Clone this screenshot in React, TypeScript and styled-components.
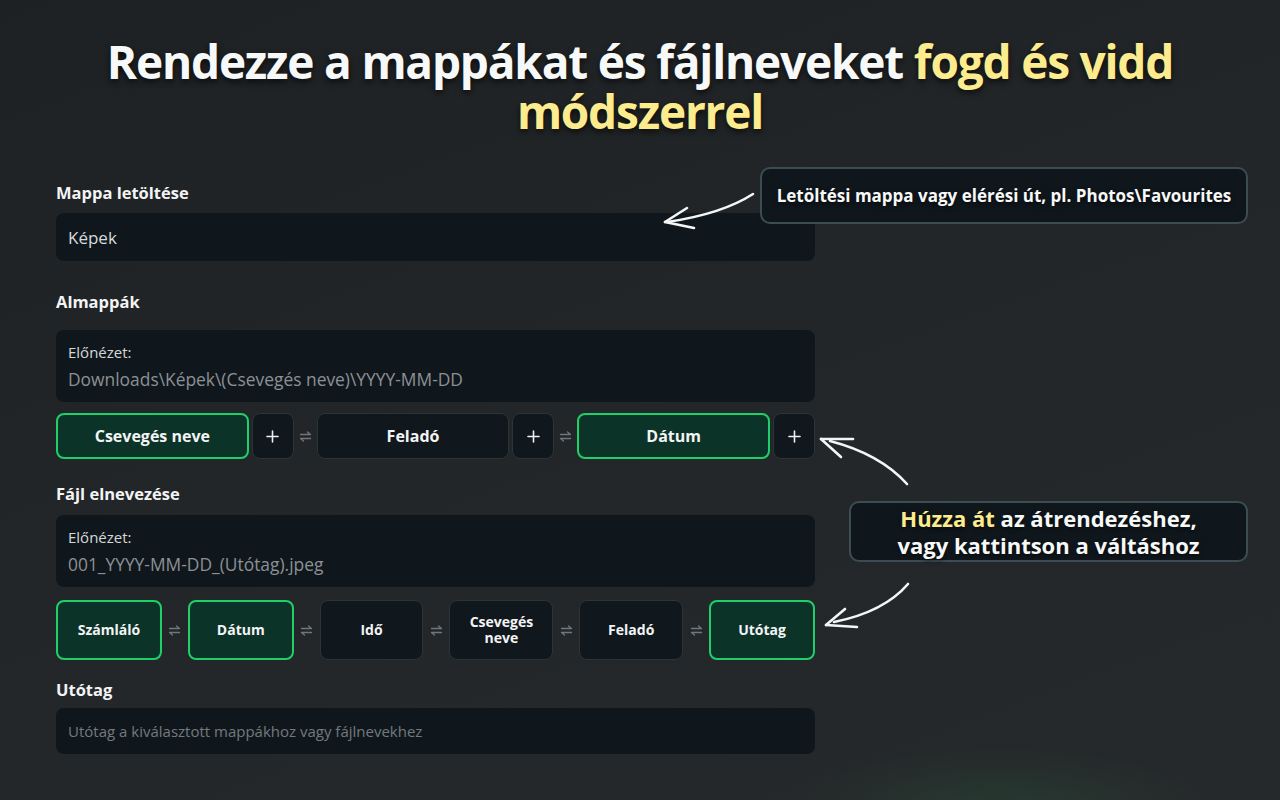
import styled, { createGlobalStyle } from "styled-components";
import { FC, Fragment } from "react";
import { Plus } from "lucide-react";

const Global = createGlobalStyle`
  * { box-sizing: border-box; }
  html, body { margin: 0; padding: 0; }
  body {
    font-family: "Open Sans", "Noto Sans", sans-serif;
    background: #232628;
  }
`;

const SwapIcon: FC = () => (
  <svg width="13" height="13" viewBox="0 0 13 13" fill="none">
    <path d="M1.5 4.5h10l-3-2.5" stroke="#6f777c" strokeWidth="1.3" strokeLinecap="round" strokeLinejoin="round" />
    <path d="M11.5 8.5h-10l3 2.5" stroke="#6f777c" strokeWidth="1.3" strokeLinecap="round" strokeLinejoin="round" />
  </svg>
);

const Arrows: FC = () => (
  <ArrowLayer width="1280" height="800" viewBox="0 0 1280 800" fill="none">
    <g stroke="#f4f5f6" strokeWidth="2.6" strokeLinecap="round" strokeLinejoin="round">
      <path d="M753 194 Q722 214 667 222" />
      <path d="M665 222 L687 208" />
      <path d="M665 222 L694 228" />

      <path d="M907 484 Q880 454 830 441" />
      <path d="M821 439 L853 439" />
      <path d="M821 439 L841 457" />

      <path d="M908 584 Q884 612 834 622" />
      <path d="M826 625 L857 627" />
      <path d="M826 625 L845 609" />
    </g>
  </ArrowLayer>
);

const folderChips = ["Csevegés neve", "Feladó", "Dátum"];
const folderActive = [true, false, true];

const fileChips = ["Számláló", "Dátum", "Idő", "Csevegés\nneve", "Feladó", "Utótag"];
const fileActive = [true, true, false, false, false, true];

export default function App() {
  return (
    <>
      <Global />
      <Page>
        <Title>
          Rendezze a mappákat és fájlneveket <Hl>fogd és vidd</Hl>
          <br />
          <Hl>módszerrel</Hl>
        </Title>

        <Form>
          <Label $gap={9}>Mappa letöltése</Label>
          <Input>Képek</Input>

          <Label $top={30} $gap={17}>Almappák</Label>
          <Preview>
            <PreviewTitle>Előnézet:</PreviewTitle>
            <PreviewValue>Downloads\Képek\(Csevegés neve)\YYYY-MM-DD</PreviewValue>
          </Preview>
          <FolderRow>
            {folderChips.map((c, i) => (
              <Fragment key={c}>
                {i > 0 && (
                  <Swap $w={23}>
                    <SwapIcon />
                  </Swap>
                )}
                <FolderGroup>
                  <Chip $active={folderActive[i]} $size={16}>
                    {c}
                  </Chip>
                  <PlusBtn>
                    <Plus size={19} strokeWidth={2} />
                  </PlusBtn>
                </FolderGroup>
              </Fragment>
            ))}
          </FolderRow>

          <Label $top={24} $gap={10}>Fájl elnevezése</Label>
          <Preview>
            <PreviewTitle>Előnézet:</PreviewTitle>
            <PreviewValue>001_YYYY-MM-DD_(Utótag).jpeg</PreviewValue>
          </Preview>
          <FileRow>
            {fileChips.map((c, i) => (
              <Fragment key={c}>
                {i > 0 && (
                  <Swap $w={26}>
                    <SwapIcon />
                  </Swap>
                )}
                <Chip $active={fileActive[i]} $size={14}>
                  {c}
                </Chip>
              </Fragment>
            ))}
          </FileRow>

          <Label $top={19} $gap={7}>Utótag</Label>
          <Input $small>Utótag a kiválasztott mappákhoz vagy fájlnevekhez</Input>
        </Form>

        <Callout $top={167} $left={760} $width={488} $height={57}>
          <CalloutText $size={17} $lh={22}>
            Letöltési mappa vagy elérési út, pl. Photos\Favourites
          </CalloutText>
        </Callout>

        <Callout $top={501} $left={849} $width={399} $height={61}>
          <CalloutText $size={22} $lh={27}>
            <Hl>Húzza át</Hl> az átrendezéshez,
            <br />
            vagy kattintson a váltáshoz
          </CalloutText>
        </Callout>

        <Arrows />
      </Page>
    </>
  );
}

const Page = styled.div`
  position: relative;
  width: 1280px;
  height: 800px;
  overflow: hidden;
  background:
    radial-gradient(ellipse 300px 90px at 1000px 810px, rgba(40, 90, 60, 0.35), transparent 70%),
    linear-gradient(160deg, #1e2123 0%, #232628 45%, #26292b 100%);
  color: #fff;
`;

const Title = styled.h1`
  margin: 0;
  padding-top: 36px;
  text-align: center;
  font-family: "Open Sans", "Noto Sans", sans-serif;
  font-weight: 700;
  font-size: 46px;
  line-height: 50px;
  letter-spacing: -1.2px;
  color: #f7f8f8;
  text-shadow: 0 3px 6px rgba(0, 0, 0, 0.7);
`;

const Hl = styled.span`
  color: #fdec8e;
`;

const Form = styled.div`
  width: 759px;
  margin: 46px 0 0 56px;
  display: flex;
  flex-direction: column;
`;

const Label = styled.div<{ $top?: number; $gap: number }>`
  margin-top: ${(p) => p.$top ?? 0}px;
  margin-bottom: ${(p) => p.$gap}px;
  font-size: 16.5px;
  line-height: 22px;
  font-weight: 700;
  color: #f3f4f5;
`;

const Input = styled.div<{ $small?: boolean }>`
  height: ${(p) => (p.$small ? 46 : 48)}px;
  display: flex;
  align-items: center;
  padding: 0 12px;
  border-radius: 8px;
  background: #10171c;
  font-size: ${(p) => (p.$small ? 15 : 17)}px;
  color: ${(p) => (p.$small ? "#737a7f" : "#d8dbdd")};
`;

const Preview = styled.div`
  height: 72px;
  padding: 12px 12px 0;
  border-radius: 8px;
  background: #10171c;
  display: flex;
  flex-direction: column;
`;

const PreviewTitle = styled.div`
  font-size: 15px;
  line-height: 20px;
  color: #d4d7d9;
`;

const PreviewValue = styled.div`
  margin-top: 6px;
  font-size: 17.4px;
  line-height: 22px;
  color: #8b9196;
`;

const FolderRow = styled.div`
  margin-top: 11px;
  height: 46px;
  display: flex;
`;

const FolderGroup = styled.div`
  flex: 1;
  display: flex;
  gap: 3px;
`;

const FileRow = styled.div`
  margin-top: 13px;
  height: 60px;
  display: flex;
`;

const Swap = styled.div<{ $w: number }>`
  width: ${(p) => p.$w}px;
  flex: none;
  display: flex;
  align-items: center;
  justify-content: center;
`;

const Chip = styled.div<{ $active: boolean; $size: number }>`
  flex: 1;
  min-width: 0;
  display: flex;
  align-items: center;
  justify-content: center;
  text-align: center;
  white-space: pre-line;
  border-radius: 8px;
  font-weight: 700;
  font-size: ${(p) => p.$size}px;
  line-height: 16px;
  color: #f3f4f5;
  background: ${(p) => (p.$active ? "#0c3328" : "#11181d")};
  border: ${(p) => (p.$active ? "2px solid #1fcf6a" : "1px solid #2b3439")};
`;

const PlusBtn = styled.div`
  width: 42px;
  flex: none;
  display: flex;
  align-items: center;
  justify-content: center;
  border-radius: 8px;
  background: #11181d;
  border: 1px solid #2b3439;
  color: #eef0f1;
`;

const Callout = styled.div<{ $top: number; $left: number; $width: number; $height: number }>`
  position: absolute;
  top: ${(p) => p.$top}px;
  left: ${(p) => p.$left}px;
  width: ${(p) => p.$width}px;
  height: ${(p) => p.$height}px;
  display: flex;
  align-items: center;
  justify-content: center;
  background: #10171c;
  border: 2px solid #3c4c53;
  border-radius: 10px;
`;

const CalloutText = styled.div<{ $size: number; $lh: number }>`
  text-align: center;
  font-weight: 700;
  font-size: ${(p) => p.$size}px;
  line-height: ${(p) => p.$lh}px;
  color: #f7f8f8;
  text-shadow: 0 2px 4px rgba(0, 0, 0, 0.6);
`;

const ArrowLayer = styled.svg`
  position: absolute;
  left: 0;
  top: 0;
  pointer-events: none;
`;
